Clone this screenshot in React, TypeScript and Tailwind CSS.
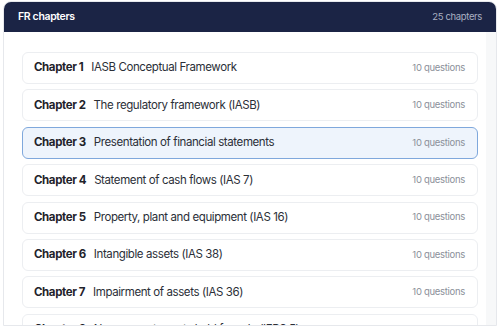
const CHAPTERS = [
  { n: 1, title: "IASB Conceptual Framework" },
  { n: 2, title: "The regulatory framework (IASB)" },
  { n: 3, title: "Presentation of financial statements" },
  { n: 4, title: "Statement of cash flows (IAS 7)" },
  { n: 5, title: "Property, plant and equipment (IAS 16)" },
  { n: 6, title: "Intangible assets (IAS 38)" },
  { n: 7, title: "Impairment of assets (IAS 36)" },
  { n: 8, title: "Non-current assets held for sale (IFRS 5)" },
  { n: 9, title: "Leases (IFRS 16)" },
];

export default function App() {
  const selected = 3;
  return (
    <div
      className="h-[327px] w-[500px] overflow-hidden bg-white pl-[3px] pr-[3px] pt-px"
      style={{ fontFamily: "Inter, 'Noto Sans', sans-serif" }}
    >
      <div className="h-[325px] overflow-hidden rounded-t-[8px] border border-[#e6e8ec]">
        <div className="flex h-[30px] items-center justify-between bg-[#1b2445] px-[14px]">
          <span className="text-[10.5px] font-semibold tracking-[-0.35px] text-white">FR chapters</span>
          <span className="text-[9.5px] tracking-[-0.35px] text-[#aab0c2]">25 chapters</span>
        </div>
        <div className="flex">
          <div className="flex flex-1 flex-col gap-[5.4px] pl-[18px] pr-[8px] pt-[20px]">
            {CHAPTERS.map((c) => {
              const active = c.n === selected;
              return (
                <div
                  key={c.n}
                  className={`flex h-[32px] shrink-0 items-center justify-between rounded-[6px] border pl-[11px] pr-[12px] ${
                    active ? "border-[#7fa8dc] bg-[#eef4fc]" : "border-[#eceef1] bg-white"
                  }`}
                >
                  <div className="flex items-center gap-[8px] text-[11.5px] tracking-[-0.4px] text-[#2b2f38]">
                    <span className="font-bold text-[#1f232b]">Chapter {c.n}</span>
                    <span>{c.title}</span>
                  </div>
                  <span className="text-[9.5px] tracking-[-0.3px] text-[#8b909a]">10 questions</span>
                </div>
              );
            })}
          </div>
          <div className="w-[10px] shrink-0 bg-[#f7f8f9]" />
        </div>
      </div>
    </div>
  );
}
